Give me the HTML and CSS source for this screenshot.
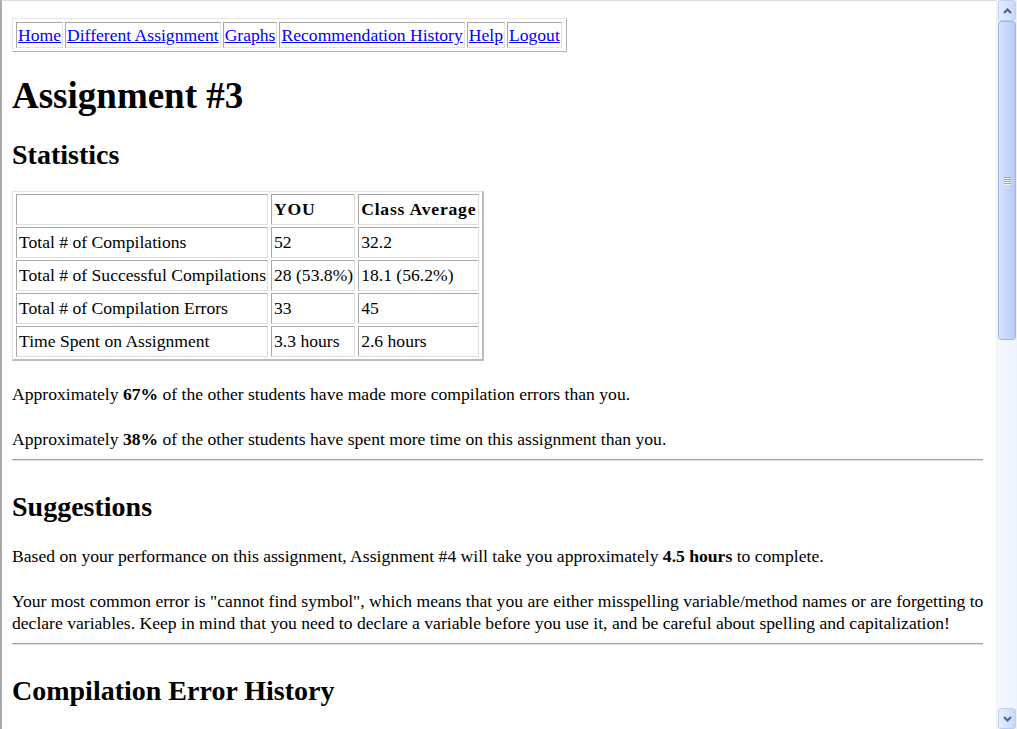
FILE: index.html
```html
<!DOCTYPE html>
<html>
<head>
<meta charset="utf-8">
<title>Assignment #3</title>
<link rel="stylesheet" href="styles.css">
</head>
<body>
<div class="window">
  <div class="page">
    <table class="nav">
      <tr>
        <td><a href="#">Home</a></td>
        <td><a href="#">Different Assignment</a></td>
        <td><a href="#">Graphs</a></td>
        <td><a href="#">Recommendation History</a></td>
        <td><a href="#">Help</a></td>
        <td><a href="#">Logout</a></td>
      </tr>
    </table>

    <h1>Assignment #3</h1>
    <h2>Statistics</h2>

    <table class="stats">
      <tr><th class="blank"></th><th>YOU</th><th>Class Average</th></tr>
      <tr><td>Total # of Compilations</td><td>52</td><td>32.2</td></tr>
      <tr><td>Total # of Successful Compilations</td><td>28 (53.8%)</td><td>18.1 (56.2%)</td></tr>
      <tr><td>Total # of Compilation Errors</td><td>33</td><td>45</td></tr>
      <tr><td>Time Spent on Assignment</td><td>3.3 hours</td><td>2.6 hours</td></tr>
    </table>

    <p class="after-table">Approximately <b>67%</b> of the other students have made more compilation errors than you.</p>
    <p>Approximately <b>38%</b> of the other students have spent more time on this assignment than you.</p>
    <hr>

    <h2>Suggestions</h2>
    <p class="after-heading">Based on your performance on this assignment, Assignment #4 will take you approximately <b>4.5 hours</b> to complete.</p>
    <p>Your most common error is "cannot find symbol", which means that you are either misspelling variable/method names or are forgetting to declare variables. Keep in mind that you need to declare a variable before you use it, and be careful about spelling and capitalization!</p>
    <hr>

    <h2>Compilation Error History</h2>
  </div>

  <div class="scrollbar">
    <div class="sb-btn">
      <svg width="9" height="6" viewBox="0 0 9 6"><polyline points="1,5 4.5,1.5 8,5" fill="none" stroke="#4d6185" stroke-width="2"/></svg>
    </div>
    <div class="sb-thumb">
      <div class="grip"><span></span><span></span><span></span><span></span></div>
    </div>
    <div class="sb-track"></div>
    <div class="sb-btn">
      <svg width="9" height="6" viewBox="0 0 9 6"><polyline points="1,1 4.5,4.5 8,1" fill="none" stroke="#4d6185" stroke-width="2"/></svg>
    </div>
  </div>
</div>
</body>
</html>
```

FILE: styles.css
```css
html, body {
  margin: 0;
  padding: 0;
  height: 100%;
  overflow: hidden;
  background: #ffffff;
}

body {
  font-family: "Liberation Serif", "Times New Roman", serif;
  font-size: 17.6px;
  line-height: 22px;
  color: #000000;
}

.window {
  display: flex;
  height: 729px;
}

.page {
  flex: 1;
  min-width: 0;
  overflow: hidden;
  border-top: 1px solid #dcdcdc;
  border-left: 2px solid #a9a9a9;
  padding: 17px 8px 0 10px;
}

a {
  color: #0000ff;
  text-decoration: underline;
}

/* navigation table */
.nav {
  border-collapse: separate;
  border-spacing: 2px 3px;
  padding: 0 2px 0 1px;
  border-style: solid;
  border-width: 1px;
  border-color: #e6e6e6 #b4b4b4 #b4b4b4 #e6e6e6;
}

.nav td {
  padding: 1px 1px;
  line-height: 22px;
  white-space: nowrap;
  border: 1px solid;
  border-color: #a8a8a8 #e2e2e2 #e2e2e2 #a8a8a8;
}

h1 {
  font-size: 37px;
  line-height: 44px;
  font-weight: bold;
  margin: 22px 0 0;
}

h2 {
  font-size: 28px;
  line-height: 32px;
  font-weight: bold;
  margin: 21px 0 0;
}

hr + h2 {
  margin-top: 30px;
}

/* statistics table */
.stats {
  margin-top: 20px;
  border-collapse: separate;
  border-spacing: 3px 2px;
  border-style: solid;
  border-width: 1px 2px 2px 1px;
  border-color: #e4e4e4 #bcbcbc #bcbcbc #e4e4e4;
}

.stats td,
.stats th {
  padding: 2px 2px;
  line-height: 25px;
  text-align: left;
  white-space: nowrap;
  border: 1px solid;
  border-color: #a8a8a8 #dedede #dedede #a8a8a8;
}

.stats td {
  padding-right: 1px;
}

.stats th {
  font-weight: bold;
  letter-spacing: 0.8px;
}

p {
  margin: 23px 0 0;
}

.after-table {
  margin-top: 22px;
}

.after-heading {
  margin-top: 22px;
}

hr {
  height: 0;
  margin: 9px 5px 0 0;
  border: 0;
  border-top: 1px solid #a0a0a0;
  border-bottom: 1px solid #e2e2e2;
}

/* scrollbar */
.scrollbar {
  width: 21px;
  flex: none;
  display: flex;
  flex-direction: column;
  background: linear-gradient(to right, #f6f8fd, #eef3fd);
  border-left: 1px solid #f0f0f0;
  box-sizing: border-box;
  padding: 0 1px;
}

.sb-btn {
  height: 21px;
  flex: none;
  box-sizing: border-box;
  border: 1px solid #bdcdf4;
  border-radius: 3px;
  background: linear-gradient(to right, #e6eefd, #c8d8fb);
  display: flex;
  align-items: center;
  justify-content: center;
}

.sb-thumb {
  height: 319px;
  flex: none;
  box-sizing: border-box;
  border: 1px solid #a3b7e4;
  border-radius: 3px;
  background: linear-gradient(to right, #d6e2fd, #c3d5fb 60%, #b7cbf7);
  display: flex;
  align-items: center;
  justify-content: center;
}

.grip {
  display: flex;
  flex-direction: column;
  gap: 1px;
}

.grip span {
  display: block;
  width: 7px;
  height: 1px;
  background: #8aa2d6;
  box-shadow: 0 1px 0 #eef3fe;
}

.sb-track {
  flex: 1;
}
```
